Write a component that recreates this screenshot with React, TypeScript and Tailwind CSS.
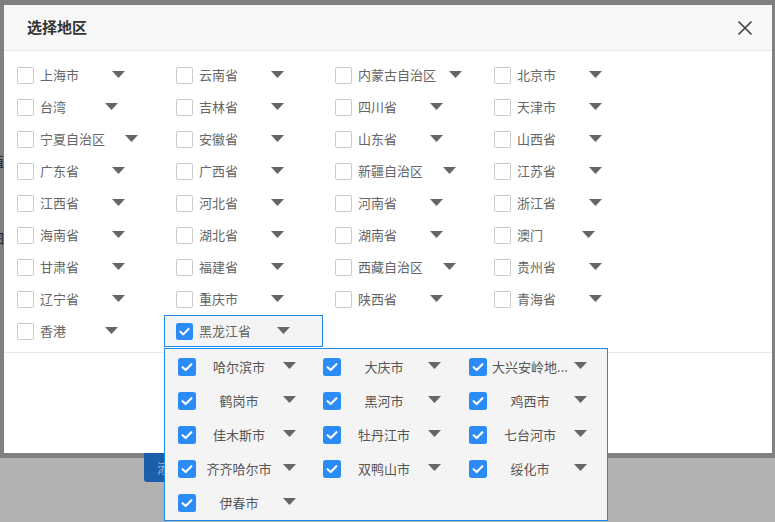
import React from "react";

const font = { fontFamily: '"Noto Sans CJK SC", "Noto Sans", sans-serif' };

const provinces: string[] = [
  "上海市", "云南省", "内蒙古自治区", "北京市",
  "台湾", "吉林省", "四川省", "天津市",
  "宁夏自治区", "安徽省", "山东省", "山西省",
  "广东省", "广西省", "新疆自治区", "江苏省",
  "江西省", "河北省", "河南省", "浙江省",
  "海南省", "湖北省", "湖南省", "澳门",
  "甘肃省", "福建省", "西藏自治区", "贵州省",
  "辽宁省", "重庆市", "陕西省", "青海省",
  "香港", "黑龙江省",
];

const cities: string[] = [
  "哈尔滨市", "大庆市", "大兴安岭地...",
  "鹤岗市", "黑河市", "鸡西市",
  "佳木斯市", "牡丹江市", "七台河市",
  "齐齐哈尔市", "双鸭山市", "绥化市",
  "伊春市",
];

function Caret() {
  return (
    <svg width="13" height="7" viewBox="0 0 13 7" className="shrink-0">
      <path d="M0 0H13L6.5 7Z" fill="#666666" />
    </svg>
  );
}

function Check({ size }: { size: number }) {
  return (
    <svg width={size} height={size} viewBox="0 0 18 18" className="shrink-0">
      <rect x="0" y="0" width="18" height="18" rx="2.5" fill="#2b8cf7" />
      <path d="M4.6 9.2L7.7 12.1L13.4 6.2" fill="none" stroke="#ffffff" strokeWidth="2.1" strokeLinecap="round" strokeLinejoin="round" />
    </svg>
  );
}

function ProvinceCell({ name, active }: { name: string; active?: boolean }) {
  return (
    <div
      className={
        active
          ? "h-[32px] w-[159px] flex items-center pl-[11px] pr-[7px] border border-[#1e88e5] bg-[#f4f4f4]"
          : "h-[32px] w-[159px] flex items-center pl-[12px] pr-[7px]"
      }
    >
      {active ? (
        <Check size={17} />
      ) : (
        <div className="w-[17px] h-[17px] shrink-0 rounded-[2px] border border-[#cccccc] bg-white" />
      )}
      <div className="ml-[6px] w-[117px] flex items-center">
        <span className="text-[13px] leading-[16px] text-[#666666] whitespace-nowrap">{name}</span>
        <div className="flex-1 flex justify-center -mt-[2px]">
          <Caret />
        </div>
      </div>
    </div>
  );
}

function CityCell({ name }: { name: string }) {
  return (
    <div className="h-[34px] flex items-center">
      <Check size={18} />
      <div className="ml-[5px] w-[76px] flex justify-center text-[13px] leading-[16px] text-[#555555] whitespace-nowrap">
        {name}
      </div>
      <div className="ml-[6px] -mt-[3px]">
        <Caret />
      </div>
    </div>
  );
}

export default function App() {
  return (
    <div className="relative w-[775px] h-[522px] overflow-hidden bg-[#b2b2b2]" style={font}>
      {/* dimmed page behind */}
      <div className="h-[458px] bg-[#808080]" />
      <span className="absolute left-[-9px] top-[154px] text-[13px] leading-[14px] text-[#1a1a1a]">值</span>
      <span className="absolute left-[-9px] top-[231px] text-[13px] leading-[14px] text-[#1a1a1a]">图</span>
      <div className="absolute left-[144px] top-[453px] w-[90px] h-[29px] rounded-b-[3px] bg-[#1b5eab] flex items-center pl-[13px]">
        <span className="text-[13px] text-[#a9b9cf]">添加</span>
      </div>

      {/* modal */}
      <div className="absolute left-[4px] top-[5px] w-[768px] h-[448px] bg-white flex flex-col">
        <div className="h-[46px] shrink-0 bg-[#f7f7f7] border-b border-[#e8e8e8] flex items-center justify-between pl-[23px] pr-[20px]">
          <span className="text-[15px] font-bold text-[#333333]">选择地区</span>
          <svg width="14" height="14" viewBox="0 0 14 14">
            <path d="M1 1L13 13M13 1L1 13" stroke="#444444" strokeWidth="1.7" strokeLinecap="round" />
          </svg>
        </div>
        <div className="pt-[8px] pb-[5px] pl-[1px] border-b border-[#e8e8e8]">
          <div className="grid grid-cols-[repeat(4,159px)]">
            {provinces.map((p) => (
              <ProvinceCell key={p} name={p} active={p === "黑龙江省"} />
            ))}
          </div>
        </div>
        <div className="flex-1" />
      </div>

      {/* city dropdown */}
      <div className="absolute left-[164px] top-[348px] w-[444px] h-[173px] border border-[#1e88e5] bg-[#f4f4f4] pl-[13px] pt-[1px]">
        <div className="grid grid-cols-[145px_146px_146px]">
          {cities.map((c) => (
            <CityCell key={c} name={c} />
          ))}
        </div>
      </div>
    </div>
  );
}
